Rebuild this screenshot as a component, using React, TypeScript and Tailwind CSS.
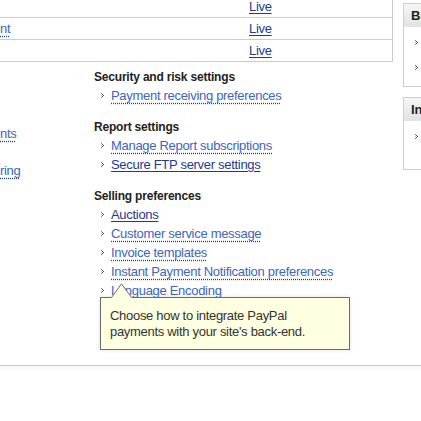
import React from "react";

const linkLight =
  "text-[#3d65bd] underline decoration-dotted decoration-[#1f3c8f] underline-offset-[3px]";
const linkDark = "text-[#1b3a96] underline underline-offset-[2px]";

function Bullet() {
  return (
    <svg width="4" height="5" viewBox="0 0 4 5" className="shrink-0">
      <rect x="0" y="0" width="1" height="1" fill="#777" />
      <rect x="1" y="1" width="1" height="1" fill="#555" />
      <rect x="2" y="2" width="1" height="1" fill="#444" />
      <rect x="1" y="3" width="1" height="1" fill="#555" />
      <rect x="0" y="4" width="1" height="1" fill="#777" />
      <rect x="0" y="2" width="1" height="1" fill="#bbb" />
    </svg>
  );
}

function LinkRow({ label, visited }: { label: string; visited?: boolean }) {
  return (
    <div className="h-[19px] flex items-center pl-[7px]">
      <Bullet />
      <a className={`ml-[6px] text-[13px] tracking-[-0.3px] ${visited ? linkDark : linkLight}`}>{label}</a>
    </div>
  );
}

interface Group {
  title: string;
  links: { label: string; visited?: boolean }[];
}

const groups: Group[] = [
  { title: "Security and risk settings", links: [{ label: "Payment receiving preferences" }] },
  {
    title: "Report settings",
    links: [{ label: "Manage Report subscriptions" }, { label: "Secure FTP server settings", visited: true }],
  },
  {
    title: "Selling preferences",
    links: [
      { label: "Auctions", visited: true },
      { label: "Customer service message" },
      { label: "Invoice templates" },
      { label: "Instant Payment Notification preferences" },
      { label: "Language Encoding" },
    ],
  },
];

function SideBox({ title, rows, pb }: { title: string; rows: number; pb: string }) {
  return (
    <div className="border border-[#cfcfcf] bg-white">
      <div className="h-[23px] flex items-center pl-[7px] bg-gradient-to-b from-[#f6f6f6] to-[#e2e2e2] font-bold text-[13px] text-[#222]">
        {title}
      </div>
      <div className={`pt-[6px] flex flex-col gap-[6px] pl-[11px] ${pb}`}>
        {Array.from({ length: rows }).map((_, i) => (
          <div key={i} className="h-[19px] flex items-center">
            <Bullet />
            <span className="ml-[6px] text-[#3d65bd]">Link</span>
          </div>
        ))}
      </div>
    </div>
  );
}

export default function App() {
  return (
    <div className="relative w-[421px] h-[421px] overflow-hidden bg-white text-[12px] text-[#333] font-['Liberation_Sans',Arial,sans-serif]">
      <div className="flex h-[365px]">
        {/* main area */}
        <div className="w-[393px] shrink-0">
          <div className="mt-[-4px] border-r border-[#cccccc]">
            {["", "nt", ""].map((first, i) => (
              <div key={i} className="h-[22px] flex items-center border-b border-[#cccccc] text-[13px] tracking-[-0.3px]">
                <div className="w-[249px] shrink-0">
                  {first && <a className={linkLight}>{first}</a>}
                </div>
                <a className={linkDark}>Live</a>
              </div>
            ))}
          </div>

          <div className="flex">
            <div className="w-[94px] shrink-0 text-[13px] tracking-[-0.3px]">
              <div className="mt-[62px] h-[19px] flex items-center">
                <a className={linkLight}>nts</a>
              </div>
              <div className="mt-[18px] h-[19px] flex items-center">
                <a className={linkLight}>ring</a>
              </div>
            </div>

            <div className="pt-[7px] flex-1 whitespace-nowrap">
              {groups.map((g) => (
                <div key={g.title} className="mb-[14px]">
                  <div className="h-[17px] leading-[17px] font-bold text-[#222] tracking-[-0.2px]">{g.title}</div>
                  {g.links.map((l) => (
                    <LinkRow key={l.label} label={l.label} visited={l.visited} />
                  ))}
                </div>
              ))}
            </div>
          </div>
        </div>

        {/* right sidebar */}
        <div className="ml-[10px] w-[160px] shrink-0 pt-[3px] flex flex-col gap-[10px]">
          <SideBox title="Buttons" rows={2} pb="pb-[9px]" />
          <SideBox title="Integration" rows={1} pb="pb-[23px]" />
        </div>
      </div>

      <div className="border-t border-[#cccccc] h-[6px] bg-gradient-to-b from-[#f6f6f6] to-white" />

      {/* tooltip */}
      <div className="absolute left-[100px] top-[297px] w-[250px] h-[53px] border border-[#6b6b6b] bg-[#ffffe1] shadow-[0_0_4px_rgba(0,0,0,0.12)] pl-[9px] pt-[10px] leading-[16px] text-[13px] tracking-[-0.3px] text-[#333]">
        Choose how to integrate PayPal
        <br />
        payments with your site's back-end.
      </div>
      <svg className="absolute left-[111px] top-[283px]" width="21" height="15" viewBox="0 0 21 15">
        <polygon points="0,15 10.5,0.5 21,15" fill="#ffffe1" />
        <polyline points="0.5,14.5 10.5,0.8 20.5,14.5" fill="none" stroke="#6b6b6b" strokeWidth="1" />
      </svg>
    </div>
  );
}
